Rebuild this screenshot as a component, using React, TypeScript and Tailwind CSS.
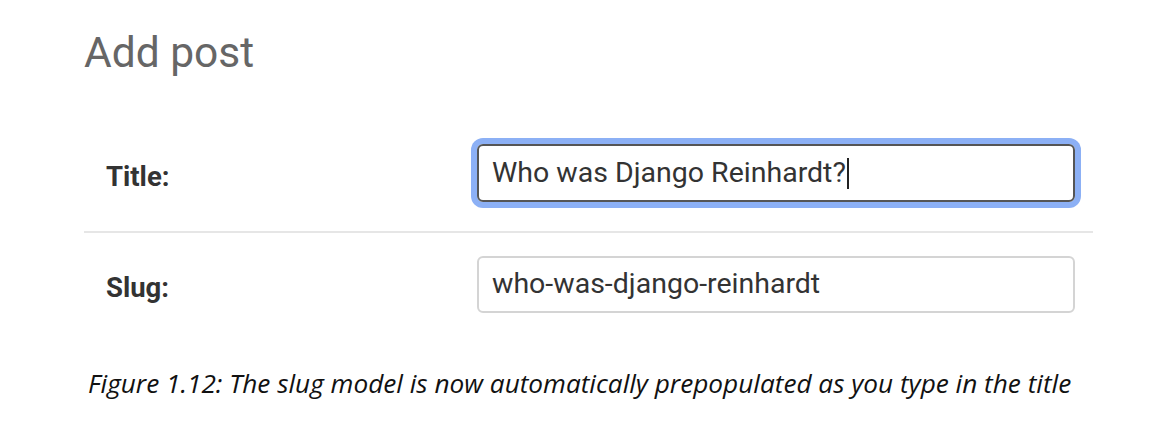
import React from 'react';

export default function App() {
  return (
    <div className="w-[1152px] h-[425px] bg-white overflow-hidden">
      {/* Page heading */}
      <div className="pl-[84px] pt-[28px]">
        <h1 className="text-[42.5px] leading-[50px] font-normal text-[#666] font-['Roboto',sans-serif]">Add post</h1>
      </div>

      {/* Form rows */}
      <div className="mt-[37px] ml-[84px] w-[1009px] font-['Roboto',sans-serif]">
        <div className="h-[118px] flex items-center pl-[22px] border-b-2 border-[#e6e6e6]">
          <label className="w-[371px] pt-[8px] text-[27.5px] font-bold text-[#333]">Title:</label>
          <div className="w-[598px] h-[58px] flex items-center px-[13px] rounded-[6px] border-2 border-[#555] shadow-[0_0_0_6px_#8cb0f5] text-[28.5px] text-[#333]">
            <span>Who was Django Reinhardt?</span>
            <span className="ml-[1px] w-[2px] h-[31px] bg-[#222]" />
          </div>
        </div>
        <div className="h-[102px] flex items-center pl-[22px]">
          <label className="w-[371px] pt-[8px] text-[27.5px] font-bold text-[#333]">Slug:</label>
          <div className="w-[598px] h-[57px] flex items-center px-[13px] rounded-[6px] border-2 border-[#d4d4d4] text-[28.5px] text-[#333]">
            who-was-django-reinhardt
          </div>
        </div>
      </div>

      {/* Caption */}
      <p className="mt-[30px] pl-[88px] text-[26.2px] leading-[36px] italic text-[#111] font-['Open_Sans',sans-serif]">
        Figure 1.12: The slug model is now automatically prepopulated as you type in the title
      </p>
    </div>
  );
}
